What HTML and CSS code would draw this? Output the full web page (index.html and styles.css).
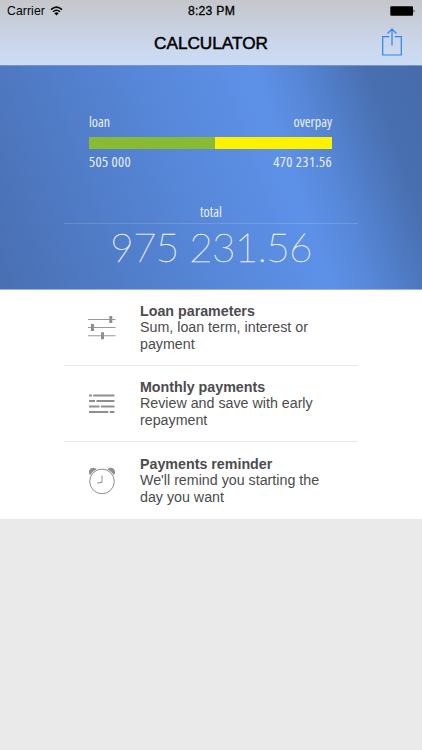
FILE: index.html
```html
<!DOCTYPE html>
<html>
	<head>
		<meta charset="utf-8">
		<title>Calculator</title>
		<link rel="stylesheet" href="styles.css">
	</head>
	<body>
		<div class="header">
			<div class="status">
				<div class="carrier">
					<span>Carrier</span>
					<svg class="wifi" width="13" height="10" viewBox="0 0 13 10">
						<path d="M1 3.6Q6.5 -1.3 12 3.6M3 5.8Q6.5 2.7 10 5.8" fill="none" stroke="#000" stroke-width="1.5"/>
						<path d="M4.4 7.2Q6.5 5.5 8.6 7.2L6.5 9.5Z"/>
					</svg>
				</div>
				<div class="time">8:23 PM</div>
				<svg class="battery" width="26" height="10" viewBox="0 0 26 10">
					<rect x="0.3" y="0.2" width="22.7" height="9.6" rx="1"/>
					<path d="M23.7 3.3Q25.4 5 23.7 6.7Z"/>
				</svg>
			</div>
			<div class="nav">
				<h1>CALCULATOR</h1>
				<svg class="share" width="20" height="28" viewBox="0 0 20 28">
					<path d="M7.2 8.7H.7V27H19.3V8.7H12.8M10 17.5V1M5.5 5.5L10 1L14.5 5.5" fill="none" stroke="#2c87ee" stroke-width="1.2"/>
				</svg>
			</div>
		</div>
		<div class="summary">
			<div class="chart">
				<div class="labels"><span class="loan">loan</span><span class="overpay">overpay</span></div>
				<div class="bar"><div class="bar-loan" style="width: 51.8%;"></div></div>
				<div class="labels nums"><span>505 000</span><span>470 231.56</span></div>
			</div>
			<div class="total-label"><span>total</span></div>
			<div class="total">975 231.56</div>
		</div>
		<ul class="menu">
			<li>
				<svg class="icon" width="28" height="28" viewBox="0 0 28 28">
					<path d="M0 5.5H27.5M0 13.5H27.5M0 21.8H27.5" stroke="#999" stroke-width="1.1"/>
					<path d="M21.3 2h3v7h-3zM3 10h3v7H3zM13 18.3h3v7h-3z" fill="#8f8f8f"/>
				</svg>
				<div class="text">
					<h2>Loan parameters</h2>
					<p>Sum, loan term, interest or<br>payment</p>
				</div>
			</li>
			<li>
				<svg class="icon" width="28" height="28" viewBox="0 0 28 28">
					<path d="M1 5.5H4M5.2 5.5H26.5M1 11H7M8.5 11H26.5M1 16.5H11.5M13 16.5H26.5M1 22H20.3M21.8 22H26.5" stroke="#8f8f8f" stroke-width="2"/>
				</svg>
				<div class="text">
					<h2>Monthly payments</h2>
					<p>Review and save with early<br>repayment</p>
				</div>
			</li>
			<li>
				<svg class="icon" width="28" height="28" viewBox="0 0 28 28">
					<circle cx="5.2" cy="5" r="4.3" fill="#8f8f8f"/>
					<circle cx="22.8" cy="5" r="4.3" fill="#8f8f8f"/>
					<circle cx="14" cy="14.4" r="13.2" fill="#fff"/>
					<circle cx="14" cy="14.4" r="12.3" fill="#fff" stroke="#8f8f8f" stroke-width="1"/>
					<path d="M14 8.5V15.2L9.2 16.2" fill="none" stroke="#8f8f8f" stroke-width="1"/>
				</svg>
				<div class="text">
					<h2>Payments reminder</h2>
					<p>We'll remind you starting the<br>day you want</p>
				</div>
			</li>
		</ul>
	</body>
</html>
```
FILE: styles.css
```css
*{margin: 0; padding: 0; box-sizing: border-box;}
body{background: #eaeaea; font-family: "Liberation Sans", Arial, sans-serif; color: #000;}
svg{display: block;}
.header{height: 66px; background: linear-gradient(#c5c7ca, #c8d1e1 45%, #cdddf7); border-bottom: 1px solid #7795c3;}
.status{height: 22px; display: grid; grid-template-columns: 1fr auto 1fr; align-items: center; padding: 0 6px 0 7px; font-size: 12.2px;}
.carrier{display: flex; align-items: center; gap: 5px; letter-spacing: .1px;}
.time{-webkit-text-stroke: .3px #000; letter-spacing: .25px;}
.battery{justify-self: end;}
.nav{height: 43px; display: grid; grid-template-columns: 1fr auto 1fr; align-items: center; padding: 0 20px;}
.nav h1{grid-column: 2; font-size: 17.2px; font-weight: normal; -webkit-text-stroke: .5px #000;}
.share{justify-self: end; margin-top: -3px;}
.summary{height: 224px; padding: 46px 64px 0; color: #e9f1ff; background: linear-gradient(70deg, #496fb2 0%, #5686d7 42%, #5d91e8 66%, #5686d6 75%, #486fb0 89%, #466cac 100%); border-bottom: 1px solid #9bb3da;}
.chart{padding: 0 26px 0 25px;}
.labels{display: flex; justify-content: space-between; font: 14px/20px "Open Sans", sans-serif; font-stretch: 75%;}
.nums{font-size: 14.5px; letter-spacing: .35px;}
.bar{height: 12px; margin: 5px 0 3px; background: #fff200;}
.bar-loan{height: 12px; background: #88bb33;}
.total-label{height: 22px; margin-top: 30px; text-align: center; font: 14px/20px "Open Sans", sans-serif; font-stretch: 75%; border-bottom: 1px solid rgba(255,255,255,.15);}
.total{font: 100 40.5px/46px Lato, sans-serif; text-align: center; white-space: nowrap; letter-spacing: -.75px; -webkit-text-stroke: .4px #e9f1ff;}
.menu{list-style: none; background: #fff; padding: 0 64px; height: 229px;}
.menu li{height: 76px; display: flex; align-items: center; padding-left: 24px; border-bottom: 1px solid #e6e7ea;}
.menu li:last-child{height: 77px; border-bottom: none;}
.icon{flex: none; margin-right: 24px;}
.text{color: #4c4c4c; font-size: 14.25px; line-height: 16.5px; white-space: nowrap;}
.text h2{font-size: 14.25px; line-height: 16.5px;}
```
